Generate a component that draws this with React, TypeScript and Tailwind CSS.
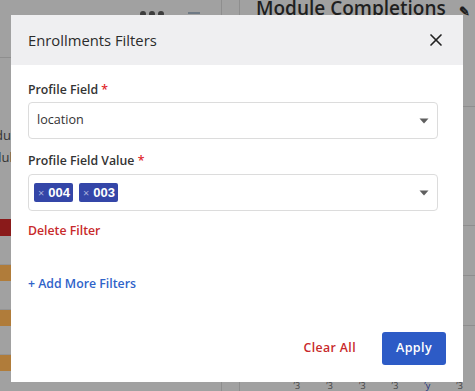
import React from "react"
import { X } from "lucide-react"

const font = { fontFamily: '"Open Sans", "Noto Sans", sans-serif' }

function Caret() {
  return (
    <svg width="10" height="6" viewBox="0 0 10 6" className="shrink-0">
      <path d="M0.5 0.5 L9.5 0.5 L5 5.5 Z" fill="#5f5f5f" />
    </svg>
  )
}

function Chip({ label }: { label: string }) {
  return (
    <span className="flex h-[19px] items-center gap-[4px] rounded-[2px] bg-[#3446a8] pl-[4px] pr-[3px] text-[13px] font-bold leading-none text-white">
      <span className="text-[11px] font-normal text-[#a9b1dd]">×</span>
      <span style={{ fontFamily: '"Liberation Sans", Arial, sans-serif' }}>{label}</span>
    </span>
  )
}

function Label({ text }: { text: string }) {
  return (
    <div className="text-[12.3px] font-semibold leading-[18px] text-[#333]">
      {text} <span className="text-[#e0262b]">*</span>
    </div>
  )
}

export default function App() {
  return (
    <div className="relative h-[391px] w-[475px] overflow-hidden bg-[#a1a1a1]" style={font}>
      {/* page behind the overlay */}
      <div className="flex h-full">
        <div className="flex w-[222px] flex-col border-r border-[#8e8e8e]">
          <div className="flex h-[58px] items-start gap-[24px] border-b border-[#8e8e8e] pl-[140px] pt-[8px]">
            <div className="flex gap-[3px] pt-[3px]">
              <span className="h-[6px] w-[6px] rounded-full bg-[#3d3d3d]" />
              <span className="h-[6px] w-[6px] rounded-full bg-[#3d3d3d]" />
              <span className="h-[6px] w-[6px] rounded-full bg-[#3d3d3d]" />
            </div>
            <span className="mt-[4px] h-[2px] w-[12px] bg-[#6f7a85]" />
          </div>
          <div className="-ml-[26px] mt-[66px] flex flex-col text-[13px] leading-[22px] text-[#333]">
            <span>Produ</span>
            <span>Module</span>
          </div>
          <div className="mt-[51px] flex flex-col">
            <div className="h-[17px] w-[11px] bg-[#8a1a1a]" />
            <div className="h-[29px] border-b border-[#949494]" />
            <div className="h-[16px] w-[11px] bg-[#b07c3a]" />
            <div className="h-[29px] border-b border-[#949494]" />
            <div className="h-[16px] w-[11px] bg-[#b07c3a]" />
            <div className="h-[29px] border-b border-[#949494]" />
            <div className="h-[16px] w-[11px] bg-[#b07c3a]" />
          </div>
        </div>
        <div className="w-[18px] border-r border-[#8e8e8e]" />
        <div className="flex flex-1 flex-col">
          <div className="-mt-[9px] flex items-center gap-[13px] whitespace-nowrap pl-[16px] text-[19px] font-semibold leading-[28px] text-[#1f1f1f]">
            Module Completions
            <span className="mt-[6px] text-[13px]">✎</span>
          </div>
          <div className="mt-[81px] h-px bg-[#8e8e8e]" />
          <div className="mt-[118px] h-px bg-[#8e8e8e]" />
          <div className="mt-[49px] h-px bg-[#8e8e8e]" />
          <div className="mt-[49px] h-px bg-[#8e8e8e]" />
          <div className="mt-auto flex justify-end gap-[26px] pb-[1px] pr-[12px] text-[9px] leading-[9px] text-[#444]">
            {["’3", "’3", "’3", "’3", "’y", "’3"].map((t, i) => (
              <span key={i} className={i === 4 ? "text-[#1c2d7a]" : ""}>{t}</span>
            ))}
          </div>
        </div>
      </div>

      {/* modal */}
      <div className="absolute left-[11px] top-[15px] flex h-[367px] w-[452px] flex-col bg-white">
        <div className="flex h-[50px] items-center justify-between bg-[#efeff1] pl-[17px] pr-[17px]">
          <span className="text-[14.8px] text-[#2b2b2b]">Enrollments Filters</span>
          <X size={20} strokeWidth={2} color="#222" />
        </div>
        <div className="flex flex-1 flex-col pl-[17px] pt-[16px]">
          <Label text="Profile Field" />
          <div className="mt-[3px] flex h-[37px] w-[410px] items-center justify-between rounded-[4px] border border-[#dcdcdc] pl-[8px] pr-[8px]">
            <span className="text-[12.6px] text-[#333]">location</span>
            <Caret />
          </div>
          <div className="mt-[13px]">
            <Label text="Profile Field Value" />
          </div>
          <div className="mt-[4px] flex h-[37px] w-[410px] items-center justify-between rounded-[4px] border border-[#dcdcdc] pl-[5px] pr-[8px]">
            <div className="flex gap-[6px]">
              <Chip label="004" />
              <Chip label="003" />
            </div>
            <Caret />
          </div>
          <div className="mt-[11px] text-[12.3px] font-semibold leading-[18px] text-[#c8292b]">Delete Filter</div>
          <div className="mt-[35px] text-[12.3px] font-semibold leading-[18px] text-[#2f63c9]">+ Add More Filters</div>
          <div className="mt-auto mb-[17px] flex items-center justify-end gap-[26px] pr-[17px]">
            <span className="text-[12.3px] font-semibold tracking-[0.4px] text-[#c8292b]">Clear All</span>
            <button className="h-[33px] w-[64px] rounded-[3px] bg-[#2d5bc6] text-[12.5px] font-semibold tracking-[0.4px] text-white">
              Apply
            </button>
          </div>
        </div>
      </div>
    </div>
  )
}
